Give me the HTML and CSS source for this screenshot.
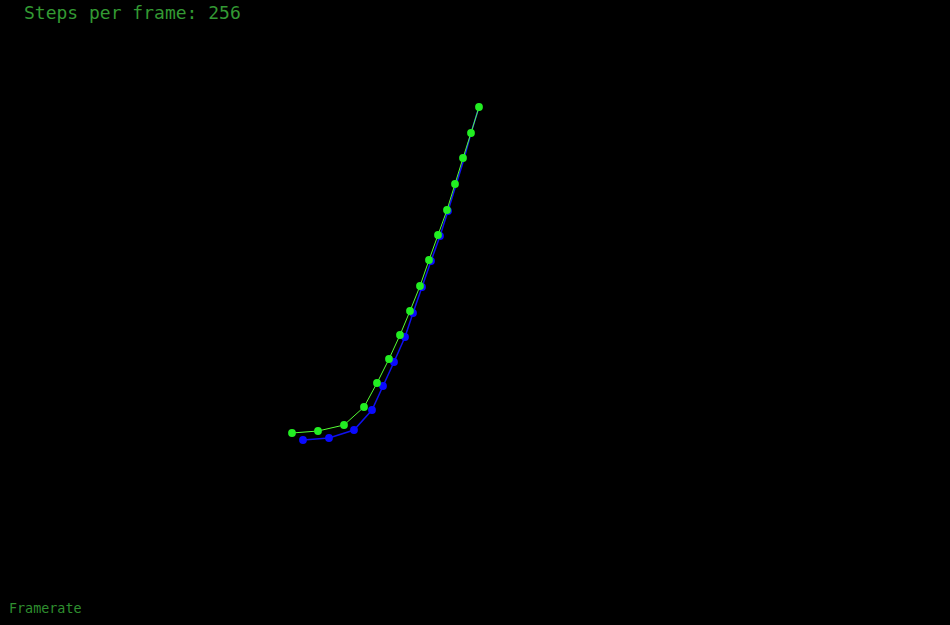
FILE: index.html
```html
<!DOCTYPE html>
<html>
<head>
<meta charset="utf-8">
<link rel="stylesheet" href="styles.css">
</head>
<body>
<div class="stage">
  <svg class="canvas" width="950" height="625" viewBox="0 0 950 625">
    <g class="blue">
      <polyline points="303,440 329,438 354,430 372,410 383,386 394,362 405,337 413,313 422,287 431,261 440,236 448,211 456,185 464,159 471,133 479,107"/>
      <circle cx="303" cy="440" r="3.9"/><circle cx="329" cy="438" r="3.9"/><circle cx="354" cy="430" r="3.9"/>
      <circle cx="372" cy="410" r="3.9"/><circle cx="383" cy="386" r="3.9"/><circle cx="394" cy="362" r="3.9"/>
      <circle cx="405" cy="337" r="3.9"/><circle cx="413" cy="313" r="3.9"/><circle cx="422" cy="287" r="3.9"/>
      <circle cx="431" cy="261" r="3.9"/><circle cx="440" cy="236" r="3.9"/><circle cx="448" cy="211" r="3.9"/>
    </g>
    <g class="green">
      <polyline points="292,433 318,431 344,425 364,407 377,383 389,359 400,335 410,311 420,286 429,260 438,235 447,210 455,184 463,158 471,133 479,107"/>
      <circle cx="292" cy="433" r="3.9"/><circle cx="318" cy="431" r="3.9"/><circle cx="344" cy="425" r="3.9"/>
      <circle cx="364" cy="407" r="3.9"/><circle cx="377" cy="383" r="3.9"/><circle cx="389" cy="359" r="3.9"/>
      <circle cx="400" cy="335" r="3.9"/><circle cx="410" cy="311" r="3.9"/><circle cx="420" cy="286" r="3.9"/>
      <circle cx="429" cy="260" r="3.9"/><circle cx="438" cy="235" r="3.9"/><circle cx="447" cy="210" r="3.9"/>
      <circle cx="455" cy="184" r="3.9"/><circle cx="463" cy="158" r="3.9"/><circle cx="471" cy="133" r="3.9"/>
      <circle cx="479" cy="107" r="3.9"/>
    </g>
  </svg>
  <div class="steps">Steps per frame: 256</div>
  <div class="spacer"></div>
  <div class="framerate">Framerate</div>
</div>
</body>
</html>
```

FILE: styles.css
```css
html, body {
  margin: 0;
  padding: 0;
  background: #000;
}
.stage {
  width: 950px;
  height: 625px;
  display: flex;
  flex-direction: column;
  overflow: hidden;
  font-family: "DejaVu Sans Mono", "Liberation Mono", monospace;
}
.canvas {
  position: absolute;
  left: 0;
  top: 0;
}
.blue polyline {
  fill: none;
  stroke: #1010ee;
  stroke-width: 1.5;
}
.blue circle {
  fill: #0a0aff;
}
.green polyline {
  fill: none;
  stroke: #55ff33;
  stroke-width: 1;
}
.green circle {
  fill: #22ee22;
}
.steps {
  position: relative;
  padding: 2px 0 0 24px;
  font-size: 18px;
  line-height: 22px;
  color: #339933;
}
.spacer {
  flex: 1;
}
.framerate {
  position: relative;
  padding: 0 0 8px 9px;
  font-size: 13.4px;
  line-height: 16px;
  color: #2f8f2f;
}
```
